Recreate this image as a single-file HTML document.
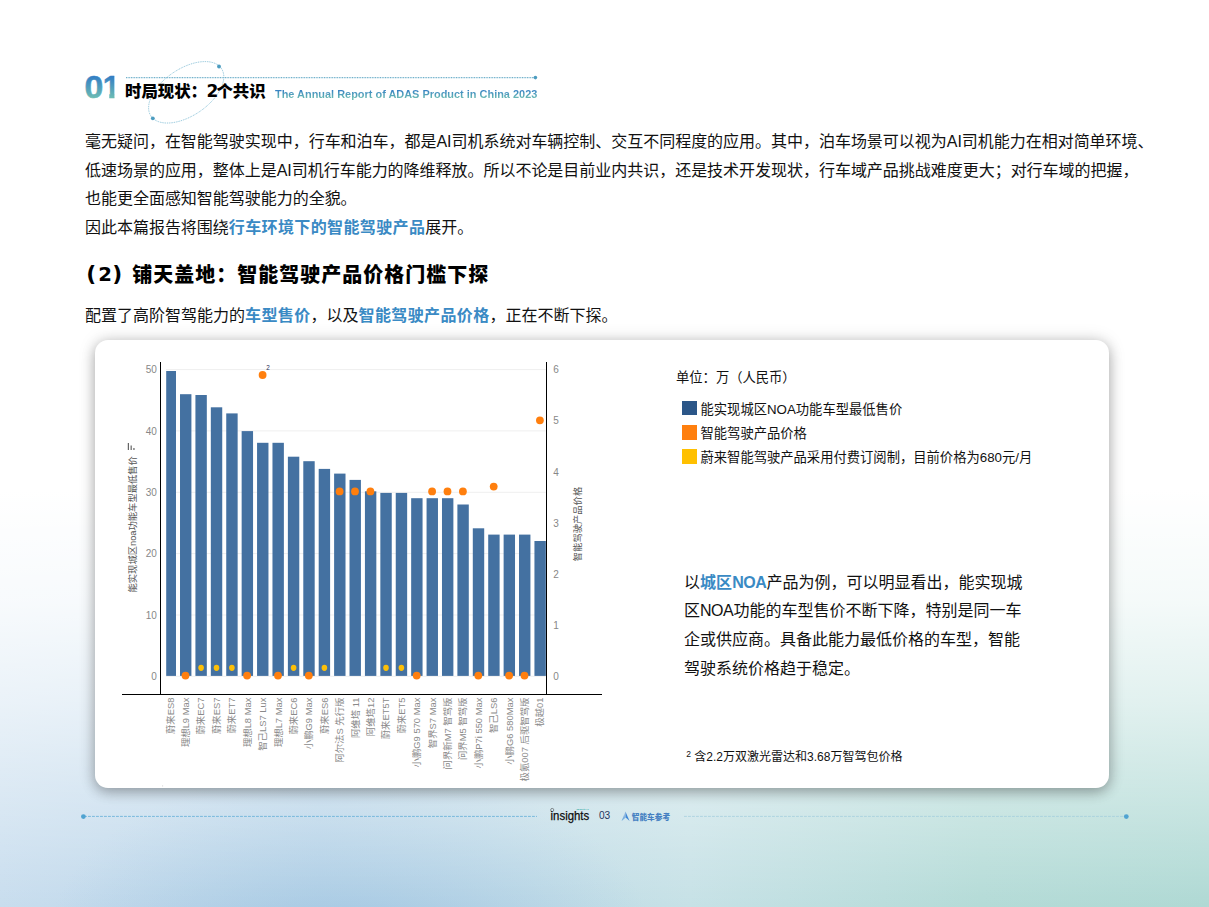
<!DOCTYPE html>
<html lang="zh-CN">
<head>
<meta charset="utf-8">
<title>时局现状：2个共识</title>
<style>
html,body{margin:0;padding:0;}
body{width:1209px;height:907px;position:relative;overflow:hidden;
  font-family:"Liberation Sans","Noto Sans CJK SC",sans-serif;color:#111;
  background:
    linear-gradient(to bottom, rgba(255,255,255,1) 0px, rgba(255,255,255,1) 490px, rgba(255,255,255,.87) 600px, rgba(255,255,255,.63) 700px, rgba(255,255,255,.33) 800px, rgba(255,255,255,0) 907px),
    radial-gradient(ellipse 300px 170px at 350px 935px, rgba(166,201,227,.9) 0%, rgba(166,201,227,0) 100%),
    linear-gradient(to right, #c8ddee 0px, #b8d4e8 320px, #c6e1e6 690px, #b4dbd7 980px, #afd9d4 1209px);
}
#wrap{position:absolute;left:0;top:0;width:1209px;height:907px;}
.abs{position:absolute;white-space:nowrap;}
.hl{color:#3a8ac4;font-weight:700;letter-spacing:0.38px;}
.grad{background:linear-gradient(to bottom,#3580c4 22%,#6cbcb4 80%);-webkit-background-clip:text;background-clip:text;color:transparent;-webkit-text-fill-color:transparent;}
#title{left:125px;top:79px;font-size:16.4px;line-height:24px;font-weight:900;color:#000;}
#sub{left:275px;top:86.6px;font-size:10.95px;line-height:14px;font-weight:700;}
#para{left:85px;top:127.8px;font-size:16px;line-height:28.85px;color:#111;letter-spacing:-0.025px;}
#h2{left:0;top:259px;width:600px;height:30px;font-size:21px;line-height:30px;font-weight:900;color:#000;}
#h2 span{position:absolute;top:0;line-height:30px;}
#lp{left:86.2px;top:-0.2px!important;font-size:21.8px;font-family:'DejaVu Sans',sans-serif;font-weight:700;}
#two{left:98.3px;top:1.2px!important;font-size:19.7px;font-family:'DejaVu Sans',sans-serif;font-weight:700;}
#rp{left:112.2px;top:-0.2px!important;font-size:21.8px;font-family:'DejaVu Sans',sans-serif;font-weight:700;}
#h2t{left:132.3px;top:0.8px!important;font-size:20px;letter-spacing:1.0px;}
#p2{left:85px;top:300.8px;font-size:16px;line-height:29px;}
#card{position:absolute;left:95px;top:340px;width:1014px;height:448px;border-radius:13px;background:#fff;
  box-shadow:0 4px 13px rgba(0,0,0,.28),0 0 18px rgba(0,0,0,.13);}
#unit{left:676px;top:368px;font-size:13.3px;line-height:20px;}
.lg{left:682px;width:15px;height:14px;position:absolute;}
.lt{left:700.5px;font-size:13.3px;line-height:20px;}
#note{left:683.9px;top:568.7px;font-size:16px;line-height:28.65px;}
#foot{left:686.3px;top:747.1px;font-size:12px;line-height:20px;}
</style>
</head>
<body>
<div id="wrap">

<!-- header decoration -->
<svg width="1209" height="140" viewBox="0 0 1209 140" style="position:absolute;left:0;top:0">
  <line x1="126" x2="535" y1="77.6" y2="77.6" stroke="#62a9c6" stroke-width="1.1" stroke-dasharray="0.9 0.75"/>
  <circle cx="535.4" cy="77.6" r="1.8" fill="#4c9cc0"/>
  <ellipse cx="186.2" cy="92.3" rx="42.5" ry="23.5" transform="rotate(-34 186.2 92.3)" fill="none" stroke="#6fb3cf" stroke-width="0.8" stroke-dasharray="0.9 0.9"/>
  <circle cx="219" cy="66.5" r="1.9" fill="#4c9cc0"/>
  <circle cx="152.8" cy="118.3" r="1.9" fill="#4c9cc0"/>
</svg>

<svg width="140" height="60" viewBox="70 55 140 60" style="position:absolute;left:70px;top:55px">
  <defs>
    <linearGradient id="ng" gradientUnits="userSpaceOnUse" x1="0" y1="77" x2="0" y2="98"><stop offset="0" stop-color="#3580c4"/><stop offset="1" stop-color="#6cbcb4"/></linearGradient>
    <clipPath id="c1"><path d="M100 70 H114.45 V100 H109.3 V88 H100 Z"/></clipPath>
  </defs>
  <g font-family="'Liberation Sans',sans-serif" font-weight="700" font-size="31.3" fill="url(#ng)" stroke="url(#ng)" stroke-width="0.5">
    <text y="98" transform="translate(84.5,0) scale(1.08,1)">0</text>
    <g clip-path="url(#c1)"><text x="102.7" y="98">1</text></g>
  </g>
</svg>
<div id="title" class="abs">时局现状：<span style="font-family:'DejaVu Sans',sans-serif;font-weight:700;font-size:17px;line-height:0;letter-spacing:-1.8px;margin-left:-0.5px">2</span>个共识</div>
<div id="sub" class="abs grad">The Annual Report of ADAS Product in China 2023</div>

<div id="para" class="abs">毫无疑问，在智能驾驶实现中，行车和泊车，都是AI司机系统对车辆控制、交互不同程度的应用。其中，泊车场景可以视为AI司机能力在相对简单环境、<br>低速场景的应用，整体上是AI司机行车能力的降维释放。所以不论是目前业内共识，还是技术开发现状，行车域产品挑战难度更大；对行车域的把握，<br>也能更全面感知智能驾驶能力的全貌。<br>因此本篇报告将围绕<span class="hl">行车环境下的智能驾驶产品</span>展开。</div>

<div id="h2" class="abs"><span id="lp">(</span><span id="two">2</span><span id="rp">)</span><span id="h2t">铺天盖地：智能驾驶产品价格门槛下探</span></div>

<div id="p2" class="abs">配置了高阶智驾能力的<span class="hl">车型售价</span>，以及<span class="hl">智能驾驶产品价格</span>，正在不断下探。</div>

<div id="card"></div>

<svg id="chart" width="1209" height="907" viewBox="0 0 1209 907" style="position:absolute;left:0;top:0;overflow:visible">
<line x1="166" x2="545.8" y1="369.6" y2="369.6" stroke="#efefef" stroke-width="1"/>
<line x1="166" x2="545.8" y1="430.9" y2="430.9" stroke="#efefef" stroke-width="1"/>
<line x1="166" x2="545.8" y1="492.3" y2="492.3" stroke="#efefef" stroke-width="1"/>
<line x1="166" x2="545.8" y1="553.6" y2="553.6" stroke="#efefef" stroke-width="1"/>
<line x1="166" x2="545.8" y1="615.0" y2="615.0" stroke="#efefef" stroke-width="1"/>
<line x1="166" x2="545.8" y1="676.3" y2="676.3" stroke="#efefef" stroke-width="1"/>
<g fill="#4471a1">
<rect x="166.20" y="371.0" width="9.80" height="304.9"/>
<rect x="180.01" y="394.2" width="11.40" height="281.7"/>
<rect x="195.42" y="395.0" width="11.40" height="280.9"/>
<rect x="210.83" y="407.3" width="11.40" height="268.6"/>
<rect x="226.24" y="413.4" width="11.40" height="262.5"/>
<rect x="241.65" y="431.1" width="11.40" height="244.8"/>
<rect x="257.06" y="442.8" width="11.40" height="233.1"/>
<rect x="272.47" y="442.8" width="11.40" height="233.1"/>
<rect x="287.88" y="456.7" width="11.40" height="219.2"/>
<rect x="303.29" y="461.2" width="11.40" height="214.7"/>
<rect x="318.70" y="468.9" width="11.40" height="207.0"/>
<rect x="334.11" y="473.6" width="11.40" height="202.3"/>
<rect x="349.52" y="479.9" width="11.40" height="196.0"/>
<rect x="364.93" y="491.3" width="11.40" height="184.6"/>
<rect x="380.34" y="492.9" width="11.40" height="183.0"/>
<rect x="395.75" y="492.9" width="11.40" height="183.0"/>
<rect x="411.16" y="498.2" width="11.40" height="177.7"/>
<rect x="426.57" y="498.2" width="11.40" height="177.7"/>
<rect x="441.98" y="498.2" width="11.40" height="177.7"/>
<rect x="457.39" y="504.5" width="11.40" height="171.4"/>
<rect x="472.80" y="528.3" width="11.40" height="147.6"/>
<rect x="488.21" y="534.6" width="11.40" height="141.3"/>
<rect x="503.62" y="534.6" width="11.40" height="141.3"/>
<rect x="519.03" y="534.6" width="11.40" height="141.3"/>
<rect x="534.44" y="541.0" width="11.40" height="134.9"/>
</g>
<g fill="#fdbf07">
<ellipse cx="201.1" cy="667.8" rx="2.8" ry="3.1"/>
<ellipse cx="216.5" cy="667.8" rx="2.8" ry="3.1"/>
<ellipse cx="231.9" cy="667.8" rx="2.8" ry="3.1"/>
<ellipse cx="293.6" cy="667.8" rx="2.8" ry="3.1"/>
<ellipse cx="324.4" cy="667.8" rx="2.8" ry="3.1"/>
<ellipse cx="386.0" cy="667.8" rx="2.8" ry="3.1"/>
<ellipse cx="401.4" cy="667.8" rx="2.8" ry="3.1"/>
</g>
<g fill="#ff7f0e">
<circle cx="185.5" cy="675.6" r="3.9"/>
<circle cx="247.1" cy="675.6" r="3.9"/>
<circle cx="278.0" cy="675.6" r="3.9"/>
<circle cx="308.8" cy="675.6" r="3.9"/>
<circle cx="416.7" cy="675.6" r="3.9"/>
<circle cx="478.3" cy="675.6" r="3.9"/>
<circle cx="509.1" cy="675.6" r="3.9"/>
<circle cx="524.5" cy="675.6" r="3.9"/>
<circle cx="262.6" cy="375.0" r="3.9"/>
<circle cx="339.6" cy="491.4" r="3.9"/>
<circle cx="355.0" cy="491.4" r="3.9"/>
<circle cx="370.4" cy="491.4" r="3.9"/>
<circle cx="432.1" cy="491.4" r="3.9"/>
<circle cx="447.5" cy="491.4" r="3.9"/>
<circle cx="462.9" cy="491.4" r="3.9"/>
<circle cx="493.7" cy="486.6" r="3.9"/>
<circle cx="539.9" cy="420.3" r="3.9"/>
</g>
<line x1="160.5" x2="160.5" y1="362" y2="695" stroke="#000" stroke-width="1" shape-rendering="crispEdges"/>
<line x1="546.5" x2="546.5" y1="362" y2="695" stroke="#000" stroke-width="1" shape-rendering="crispEdges"/>
<line x1="122" x2="602" y1="694.5" y2="694.5" stroke="#000" stroke-width="1" shape-rendering="crispEdges"/>
<g font-family="'Liberation Sans','Noto Sans CJK SC',sans-serif" font-size="10" fill="#878787">
<text x="156.8" y="373.3" text-anchor="end">50</text>
<text x="156.8" y="434.6" text-anchor="end">40</text>
<text x="156.8" y="496.0" text-anchor="end">30</text>
<text x="156.8" y="557.3" text-anchor="end">20</text>
<text x="156.8" y="618.7" text-anchor="end">10</text>
<text x="156.8" y="680.0" text-anchor="end">0</text>
<text x="553.2" y="373.3">6</text>
<text x="553.2" y="424.4">5</text>
<text x="553.2" y="475.5">4</text>
<text x="553.2" y="526.7">3</text>
<text x="553.2" y="577.8">2</text>
<text x="553.2" y="628.9">1</text>
<text x="553.2" y="680.0">0</text>
</g>
<text x="266.3" y="370.3" font-family="'Liberation Sans','Noto Sans CJK SC',sans-serif" font-size="6.4" fill="#1f2f55">2</text>
<g font-family="'Liberation Sans','Noto Sans CJK SC',sans-serif" font-size="9.4" fill="#8a8a8a" font-weight="400">
<text transform="translate(173.6,697.6) rotate(-90)" text-anchor="end">蔚来ES8</text>
<text transform="translate(189.0,697.6) rotate(-90)" text-anchor="end">理想L9 Max</text>
<text transform="translate(204.4,697.6) rotate(-90)" text-anchor="end">蔚来EC7</text>
<text transform="translate(219.8,697.6) rotate(-90)" text-anchor="end">蔚来ES7</text>
<text transform="translate(235.2,697.6) rotate(-90)" text-anchor="end">蔚来ET7</text>
<text transform="translate(250.6,697.6) rotate(-90)" text-anchor="end">理想L8 Max</text>
<text transform="translate(266.1,697.6) rotate(-90)" text-anchor="end">智己LS7 Lux</text>
<text transform="translate(281.5,697.6) rotate(-90)" text-anchor="end">理想L7 Max</text>
<text transform="translate(296.9,697.6) rotate(-90)" text-anchor="end">蔚来EC6</text>
<text transform="translate(312.3,697.6) rotate(-90)" text-anchor="end">小鹏G9 Max</text>
<text transform="translate(327.7,697.6) rotate(-90)" text-anchor="end">蔚来ES6</text>
<text transform="translate(343.1,697.6) rotate(-90)" text-anchor="end">阿尔法S 先行版</text>
<text transform="translate(358.5,697.6) rotate(-90)" text-anchor="end">阿维塔 11</text>
<text transform="translate(373.9,697.6) rotate(-90)" text-anchor="end">阿维塔12</text>
<text transform="translate(389.3,697.6) rotate(-90)" text-anchor="end">蔚来ET5T</text>
<text transform="translate(404.8,697.6) rotate(-90)" text-anchor="end">蔚来ET5</text>
<text transform="translate(420.2,697.6) rotate(-90)" text-anchor="end">小鹏G9 570 Max</text>
<text transform="translate(435.6,697.6) rotate(-90)" text-anchor="end">智界S7 Max</text>
<text transform="translate(451.0,697.6) rotate(-90)" text-anchor="end">问界新M7 智驾版</text>
<text transform="translate(466.4,697.6) rotate(-90)" text-anchor="end">问界M5 智驾版</text>
<text transform="translate(481.8,697.6) rotate(-90)" text-anchor="end">小鹏P7i 550 Max</text>
<text transform="translate(497.2,697.6) rotate(-90)" text-anchor="end">智己LS6</text>
<text transform="translate(512.6,697.6) rotate(-90)" text-anchor="end">小鹏G6 580Max</text>
<text transform="translate(528.0,697.6) rotate(-90)" text-anchor="end">极氪007 后驱智驾版</text>
<text transform="translate(543.4,697.6) rotate(-90)" text-anchor="end">极越01</text>
</g>
<text transform="translate(135.6,524.3) rotate(-90)" text-anchor="middle" font-family="'Liberation Sans','Noto Sans CJK SC',sans-serif" font-size="9.3" fill="#555">能实现城区noa功能车型最低售价</text>
<text transform="translate(581.2,524) rotate(-90)" text-anchor="middle" font-family="'Liberation Sans','Noto Sans CJK SC',sans-serif" font-size="9.3" fill="#555">智能驾驶产品价格</text>
<g fill="#555"><rect x="127.8" y="443" width="1.1" height="7"/><rect x="130.6" y="445.5" width="1.1" height="4.5"/><rect x="133.4" y="448" width="1.1" height="2"/></g>
<rect x="162.3" y="785.3" width="0.8" height="1.2" fill="#cfcfcf"/>
</svg>

<div id="unit" class="abs">单位：万（人民币）</div>
<div class="lg" style="top:401.3px;height:13.3px;background:#2b5688"></div>
<div class="lg" style="top:425.2px;height:14.7px;background:#ff7f0e"></div>
<div class="lg" style="top:449px;height:14.8px;background:#ffc000"></div>
<div class="abs lt" style="top:399.5px">能实现城区NOA功能车型最低售价</div>
<div class="abs lt" style="top:423.5px">智能驾驶产品价格</div>
<div class="abs lt" style="top:447.5px">蔚来智能驾驶产品采用付费订阅制，目前价格为680元/月</div>

<div id="note" class="abs">以<span class="hl" style="letter-spacing:0.2px">城区<span style="letter-spacing:-0.5px">NOA</span></span>产品为例，可以明显看出，能实现城<br>区<span style="letter-spacing:-0.4px">NOA</span>功能的车型售价不断下降，特别是同一车<br>企或供应商。具备此能力最低价格的车型，智能<br>驾驶系统价格趋于稳定。</div>

<div id="foot" class="abs"><span style="font-size:8.5px;position:relative;top:-4px">2</span> 含2.2万双激光雷达和3.68万智驾包价格</div>

<!-- footer -->
<svg width="1209" height="40" viewBox="0 795 1209 40" style="position:absolute;left:0;top:795px">
  <line x1="84" x2="537" y1="816.4" y2="816.4" stroke="#63aed8" stroke-width="0.8" stroke-dasharray="2.9 1.1"/>
  <circle cx="83.4" cy="816.6" r="2.4" fill="#4fa3d1"/>
  <line x1="684" x2="1126" y1="816.4" y2="816.4" stroke="#9fcbdc" stroke-width="0.7" stroke-dasharray="2.9 1.1"/>
  <circle cx="1126.3" cy="816.6" r="2.4" fill="#4fa3d1"/>
  <defs><linearGradient id="lw" x1="0" y1="0" x2="0" y2="1"><stop offset="0" stop-color="#c3d3e2"/><stop offset="1" stop-color="#5a9ede"/></linearGradient></defs>
  <circle cx="552.2" cy="810" r="1.6" fill="none" stroke="#333" stroke-width="0.5"/>
  <text x="576.2" y="809.8" font-family="'Liberation Sans',sans-serif" font-size="2.2" font-weight="700" fill="#4fb5b0" textLength="12.6" lengthAdjust="spacingAndGlyphs">QbitAI</text>
  <text x="550.6" y="820.1" font-family="'Liberation Sans',sans-serif" font-size="12.9" fill="#0c0c0c" stroke="#0c0c0c" stroke-width="0.25" textLength="38.6" lengthAdjust="spacingAndGlyphs">insights</text>
  <text x="598.9" y="819.3" font-family="'Liberation Sans',sans-serif" font-size="10.2" fill="#1f3560" textLength="11.3" lengthAdjust="spacingAndGlyphs">03</text>
  <path d="M625.4 811.5 L621.6 820.9 L625.7 817.6 Z" fill="url(#lw)"/>
  <path d="M625.4 811.5 L629.6 820.9 L625.7 817.6 Z" fill="#3f86d6"/>
  <text x="631.8" y="819.9" font-family="'Liberation Sans','Noto Sans CJK SC',sans-serif" font-size="7.8" font-weight="900" fill="#4580c2" textLength="38.3" lengthAdjust="spacingAndGlyphs">智能车参考</text>
</svg>

</div>
</body>
</html>
